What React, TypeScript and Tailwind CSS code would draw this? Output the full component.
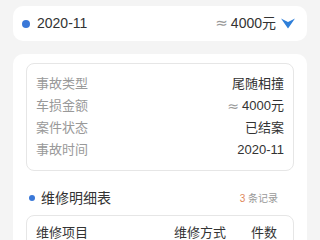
const rows = [
  { label: "事故类型", value: "尾随相撞" },
  { label: "车损金额", value: "≈4000元" },
  { label: "案件状态", value: "已结案" },
  { label: "事故时间", value: "2020-11" },
];

const ChevronDown = () => (
  <svg width="14" height="11" viewBox="0 0 14 11" className="ml-[5px]">
    <path d="M0 0.5 L7 4 L14 0.5 L7 10.5 Z" fill="#2f7fd9" />
  </svg>
);

// approx sign drawn from DejaVu, wider than the Liberation one
const Approx = ({ size }: { size: string }) => (
  <span
    className={`mr-[3px] leading-none text-[#999] ${size}`}
    style={{ fontFamily: '"DejaVu Sans", sans-serif' }}
  >
    ≈
  </span>
);

const App = () => {
  return (
    <div
      className="w-[320px] h-[240px] overflow-hidden bg-[#f4f4f4] px-[13px] pt-[6px]"
      style={{ fontFamily: '"Liberation Sans", "Noto Sans CJK SC", sans-serif' }}
    >
      {/* Summary bar */}
      <div className="flex h-[35px] items-center rounded-[10px] bg-white pl-[9px] pr-[12px]">
        <span className="h-[8px] w-[8px] rounded-full bg-[#3a78d8]"></span>
        <span className="ml-[7px] text-[14px] text-[#333]">2020-11</span>
        <span className="ml-auto flex items-center text-[14px] text-[#333]">
          <Approx size="text-[15px]" />
          4000元
        </span>
        <ChevronDown />
      </div>

      {/* Detail card */}
      <div className="mt-[13px] rounded-[10px] bg-white px-[13px] pt-[9px] pb-4">
        <div className="rounded-[8px] border border-[#e6e6e6] px-[9px] py-[9px]">
          {rows.map((row) => (
            <div key={row.label} className="flex h-[22px] items-center justify-between text-[13px]">
              <span className="text-[#999]">{row.label}</span>
              <span className="flex items-center text-[#333]">
                {row.value.startsWith("≈") ? (
                  <>
                    <Approx size="text-[14px]" />
                    {row.value.slice(1)}
                  </>
                ) : (
                  row.value
                )}
              </span>
            </div>
          ))}
        </div>

        {/* Repair list header */}
        <div className="mt-[15px] flex h-[24px] items-center pl-[3px] pr-[16px]">
          <span className="h-[6px] w-[6px] rounded-full bg-[#3a78d8]"></span>
          <span className="ml-[6px] text-[14px] text-[#333]">维修明细表</span>
          <span className="ml-auto text-[10px] text-[#999]">
            <span className="text-[#e0875a]">3</span> 条记录
          </span>
        </div>

        <div className="mt-[5px] rounded-[8px] border border-[#e6e6e6] pl-[9px] pr-[16px]">
          <div className="flex h-[34px] items-center text-[13px] text-[#333]">
            <span>维修项目</span>
            <span className="ml-auto">维修方式</span>
            <span className="ml-[25px]">件数</span>
          </div>
        </div>
      </div>
    </div>
  );
};

export default App;
